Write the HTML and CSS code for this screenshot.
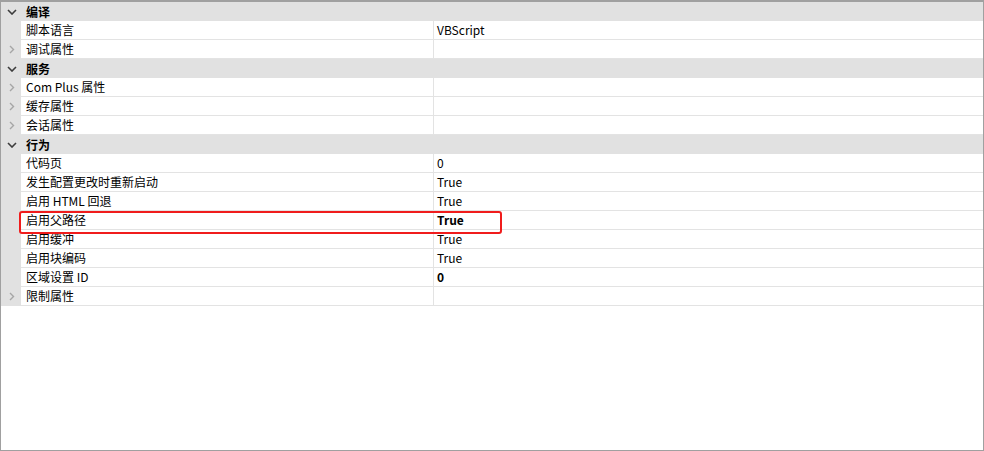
FILE: index.html
```html
<!DOCTYPE html>
<html>
<head>
<meta charset="utf-8">
<link rel="stylesheet" href="styles.css">
</head>
<body>
<div class="panel">
  <div class="cat"><span class="gut"><svg class="down" width="10" height="6" viewBox="0 0 10 6"><path d="M1 1 L5 5 L9 1" /></svg></span><span class="cname">编译</span></div>
  <div class="row"><span class="gut"></span><span class="name">脚本语言</span><span class="val">VBScript</span></div>
  <div class="row"><span class="gut"><svg class="right" width="6" height="9" viewBox="0 0 6 9"><path d="M1 1 L4.5 4.5 L1 8" /></svg></span><span class="name">调试属性</span><span class="val"></span></div>
  <div class="cat"><span class="gut"><svg class="down" width="10" height="6" viewBox="0 0 10 6"><path d="M1 1 L5 5 L9 1" /></svg></span><span class="cname">服务</span></div>
  <div class="row"><span class="gut"><svg class="right" width="6" height="9" viewBox="0 0 6 9"><path d="M1 1 L4.5 4.5 L1 8" /></svg></span><span class="name">Com Plus 属性</span><span class="val"></span></div>
  <div class="row"><span class="gut"><svg class="right" width="6" height="9" viewBox="0 0 6 9"><path d="M1 1 L4.5 4.5 L1 8" /></svg></span><span class="name">缓存属性</span><span class="val"></span></div>
  <div class="row"><span class="gut"><svg class="right" width="6" height="9" viewBox="0 0 6 9"><path d="M1 1 L4.5 4.5 L1 8" /></svg></span><span class="name">会话属性</span><span class="val"></span></div>
  <div class="cat"><span class="gut"><svg class="down" width="10" height="6" viewBox="0 0 10 6"><path d="M1 1 L5 5 L9 1" /></svg></span><span class="cname">行为</span></div>
  <div class="row"><span class="gut"></span><span class="name">代码页</span><span class="val">0</span></div>
  <div class="row"><span class="gut"></span><span class="name">发生配置更改时重新启动</span><span class="val">True</span></div>
  <div class="row"><span class="gut"></span><span class="name">启用 HTML 回退</span><span class="val">True</span></div>
  <div class="row"><span class="gut"></span><span class="name">启用父路径</span><span class="val bold">True</span></div>
  <div class="row"><span class="gut"></span><span class="name">启用缓冲</span><span class="val">True</span></div>
  <div class="row"><span class="gut"></span><span class="name">启用块编码</span><span class="val">True</span></div>
  <div class="row"><span class="gut"></span><span class="name">区域设置 ID</span><span class="val bold">0</span></div>
  <div class="row"><span class="gut"><svg class="right" width="6" height="9" viewBox="0 0 6 9"><path d="M1 1 L4.5 4.5 L1 8" /></svg></span><span class="name">限制属性</span><span class="val"></span></div>
  <div class="highlight"></div>
</div>
</body>
</html>
```
FILE: styles.css
```css
* { box-sizing: border-box; }
html, body { margin: 0; padding: 0; background: #fff; }
.panel {
  position: relative;
  width: 984px;
  height: 451px;
  border: 1px solid #a0a0a0;
  border-top: 2px solid #a0a0a0;
  font-family: "Noto Sans CJK SC", "Noto Sans", sans-serif;
  font-size: 12px;
  color: #000;
  background: #fff;
}
.row, .cat {
  display: grid;
  grid-template-columns: 20px 413px 1fr;
  height: 19px;
}
.cat {
  grid-template-columns: 20px 1fr;
  background: #e1e1e1;
}
.gut {
  background: #e1e1e1;
  display: flex;
  align-items: center;
  justify-content: center;
  height: 19px;
}
.cat .gut { justify-content: flex-start; padding-left: 6px; padding-top: 1px; }
.row .gut { justify-content: flex-start; padding-left: 8px; }
.name, .val, .cname {
  display: flex;
  align-items: center;
  padding-left: 5px;
  height: 19px;
  line-height: 18px;
  white-space: nowrap;
}
.name, .val { border-bottom: 1px solid #e3e3e3; }
.name { border-right: 1px solid #e3e3e3; }
.val { padding-left: 3px; }
.cname { font-weight: bold; }
.bold { font-weight: bold; }
.down path { fill: none; stroke: #3c3c3c; stroke-width: 1.6; }
.right path { fill: none; stroke: #a6a6a6; stroke-width: 1.4; }
.highlight {
  position: absolute;
  left: 18px;
  top: 209px;
  width: 483px;
  height: 23px;
  border: 2px solid #f01c1c;
  border-radius: 3px;
}
```
